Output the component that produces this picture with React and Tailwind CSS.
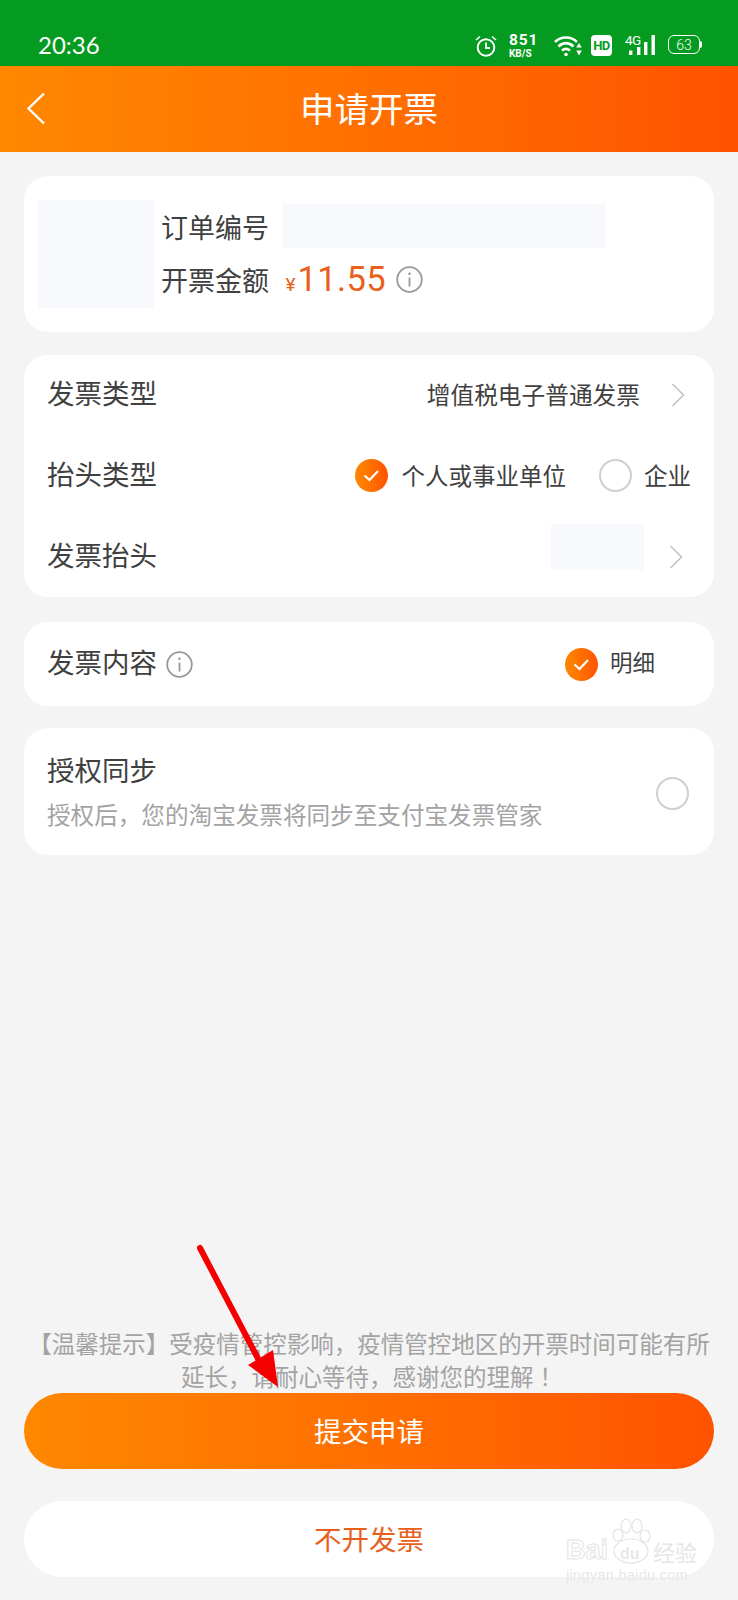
import React from 'react';

const cjk = "font-['Noto_Sans_CJK_SC','Noto_Sans',sans-serif]";

function Chevron({ className }) {
  return (
    <svg className={className} width="14" height="24" viewBox="0 0 14 24" fill="none">
      <path d="M1.5 1 L12.5 12 L1.5 23" stroke="#c4c4c4" strokeWidth="1.6" />
    </svg>
  );
}

function InfoIcon() {
  return (
    <svg width="27" height="27" viewBox="0 0 27 27" fill="none">
      <circle cx="13.5" cy="13.5" r="12.3" stroke="#999" strokeWidth="1.8" />
      <circle cx="13.5" cy="7.8" r="1.3" fill="#999" />
      <path d="M13.5 11.5 V20.5" stroke="#999" strokeWidth="1.8" />
    </svg>
  );
}

function Checked() {
  return (
    <span className="flex h-[33px] w-[33px] shrink-0 items-center justify-center rounded-full bg-gradient-to-r from-[#ff8800] to-[#ff5200]">
      <svg width="17" height="13" viewBox="0 0 17 13" fill="none">
        <path d="M1.5 6.5 L6.5 11 L15 2" stroke="#fff" strokeWidth="2.2" />
      </svg>
    </span>
  );
}

function Unchecked() {
  return <span className="block h-[33px] w-[33px] shrink-0 rounded-full border-2 border-[#cfcfcf]" />;
}

function Label({ children }) {
  return <span className="pb-[4px] text-[27.5px] leading-none">{children}</span>;
}

function StatusIcons() {
  return (
    <div className="flex items-start text-white">
      <svg width="22" height="22" viewBox="0 0 22 22" fill="none" stroke="#fff" strokeWidth="2">
        <circle cx="11" cy="12.5" r="8.3" />
        <path d="M11 7.5 V13 H15" strokeWidth="1.8" />
        <path d="M1 5 L5 1.5 M21 5 L17 1.5" strokeWidth="1.6" />
      </svg>
      <div className="ml-[12px] flex w-[30px] flex-col font-['Roboto',sans-serif] font-bold">
        <span className="-mt-[3px] text-[15.5px] leading-[16px] tracking-[0.8px]">851</span>
        <span className="text-[10px] leading-[11px]">KB/S</span>
      </div>
      <svg className="ml-[15px]" width="28" height="22" viewBox="0 0 28 22" fill="none" stroke="#fff" strokeWidth="2.6">
        <path d="M1 7 C7 1 17 1 23 7" />
        <path d="M4.5 11.5 C9 7 15 7 19.5 11.5" />
        <path d="M8 15.5 C10.5 13.5 13.5 13.5 16 15.5" />
        <circle cx="12" cy="19.5" r="1.8" fill="#fff" stroke="none" />
        <path d="M25 8 L27.8 12.5 H22.2 Z M25 20.5 L27.8 15.5 H22.2 Z" fill="#fff" stroke="none" />
      </svg>
      <span className="ml-[9px] flex h-[21px] w-[21px] items-center justify-center rounded-[4px] bg-white font-['Roboto',sans-serif] text-[13px] font-bold leading-none tracking-[-0.5px] text-[#049b20]">
        HD
      </span>
      <div className="relative ml-[13px] h-[21px] w-[32px]">
        <span className="absolute -top-[1px] left-0 font-['Roboto',sans-serif] text-[13.5px] leading-[13px] tracking-[-0.5px]">4G</span>
        <svg className="absolute left-0 top-0" width="32" height="21" viewBox="0 0 32 21" fill="#fff">
          <rect x="4" y="15.5" width="3.4" height="4.5" />
          <rect x="12" y="12" width="3.4" height="8" />
          <rect x="19" y="7" width="3.4" height="13" />
          <rect x="26.5" y="0" width="3.4" height="20" />
        </svg>
      </div>
      <div className="ml-[11px] flex items-center">
        <span className="flex h-[19px] w-[32px] items-center justify-center rounded-[6px] border-[1.5px] border-white font-['Roboto',sans-serif] text-[14px] font-light leading-none">
          63
        </span>
        <span className="h-[7px] w-[2px] rounded-r-sm bg-white" />
      </div>
    </div>
  );
}

function Watermark() {
  return (
    <div className="pointer-events-none absolute left-[566px] top-[1518px] h-[66px] w-[134px]">
      <span className="absolute left-0 top-[17px] font-['Liberation_Sans',sans-serif] text-[27px] font-bold leading-[30px] text-transparent [-webkit-text-stroke:1px_#e4e4e4]">
        Bai
      </span>
      <svg className="absolute left-[44px] top-0" width="42" height="48" viewBox="0 0 42 48" fill="#fff" stroke="#e4e4e4" strokeWidth="1.2">
        <ellipse cx="8" cy="17" rx="5" ry="6" />
        <ellipse cx="16" cy="8" rx="5" ry="7" />
        <ellipse cx="27" cy="8" rx="5" ry="7" />
        <ellipse cx="35" cy="18" rx="5" ry="6" />
        <ellipse cx="21" cy="33" rx="17" ry="12" />
      </svg>
      <span className="absolute left-[54px] top-[26px] font-['Liberation_Sans',sans-serif] text-[16px] font-bold leading-[20px] text-[#e8e8e8]">
        du
      </span>
      <span className={`absolute left-[87px] top-[21px] text-[22px] leading-[24px] text-[#e6e6e6] ${cjk}`}>经验</span>
      <span className="absolute left-0 top-[49px] font-['Liberation_Sans',sans-serif] text-[14.5px] leading-[17px] tracking-[0.3px] text-[#e8e8e8]">
        jingyan.baidu.com
      </span>
    </div>
  );
}

function Arrow() {
  return (
    <svg className="pointer-events-none absolute left-[190px] top-[1240px]" width="100" height="155" viewBox="0 0 100 155" fill="none">
      <path d="M10 8 L74 130" stroke="#f40000" strokeWidth="6" strokeLinecap="round" />
      <path d="M88 147 L58 125 L83 110 Z" fill="#f40000" />
    </svg>
  );
}

export default function App() {
  return (
    <div className={`relative flex h-[1600px] w-[738px] flex-col overflow-hidden bg-[#f4f4f4] text-[#404040] ${cjk}`}>
      <div className="flex h-[66px] shrink-0 items-start justify-between bg-[#049b20] pl-[38px] pr-[36px] pt-[35px]">
        <span className="-mt-[1px] font-['Lato',sans-serif] text-[24px] leading-[22px] text-white">20:36</span>
        <StatusIcons />
      </div>

      <header className="relative flex h-[86px] shrink-0 items-center justify-center bg-gradient-to-r from-[#ff8800] to-[#ff5200]">
        <svg className="absolute left-[26px] top-[26px]" width="20" height="33" viewBox="0 0 20 33" fill="none">
          <path d="M18 1.5 L2.5 16.5 L18 31.5" stroke="#fff" strokeWidth="2.4" />
        </svg>
        <h1 className="pb-[3px] text-[34.5px] font-normal leading-none text-white">申请开票</h1>
      </header>

      <main className="flex flex-1 flex-col px-[24px]">
        <section className="mt-[24px] flex h-[156px] rounded-[24px] bg-white pl-[14px] pt-[24px]">
          <div className="h-[108px] w-[116px] shrink-0 bg-[#f8f9fc]" />
          <div className="ml-[7px] flex flex-col">
            <div className="flex h-[53px] items-center">
              <span className="w-[120.5px] text-[27px] leading-none">订单编号</span>
              <span className="-mt-[2px] block h-[44px] w-[324px] bg-[#f8f9fc]" />
            </div>
            <div className="flex h-[53px] items-center">
              <span className="w-[124.5px] text-[27px] leading-none">开票金额</span>
              <span className="flex items-baseline pt-[2px] font-['Roboto',sans-serif] text-[#e8601c]">
                <span className="text-[19px]">¥</span>
                <span className="ml-[2px] text-[34.5px] leading-none tracking-[0.4px]">11.55</span>
              </span>
              <span className="ml-[10px] flex"><InfoIcon /></span>
            </div>
          </div>
        </section>

        <section className="mt-[23px] flex h-[242px] flex-col rounded-[24px] bg-white pl-[23px]">
          <div className="flex h-[80px] items-center">
            <Label>发票类型</Label>
            <span className="ml-auto text-[23.7px] leading-none">增值税电子普通发票</span>
            <Chevron className="ml-[31px] mr-[29px]" />
          </div>
          <div className="flex h-[81px] items-center">
            <Label>抬头类型</Label>
            <span className="ml-auto"><Checked /></span>
            <span className="ml-[14px] text-[23.5px] leading-none">个人或事业单位</span>
            <span className="ml-[33px]"><Unchecked /></span>
            <span className="ml-[12px] mr-[23px] text-[23.5px] leading-none">企业</span>
          </div>
          <div className="flex h-[81px] items-center">
            <Label>发票抬头</Label>
            <span className="ml-auto -mt-[20px] block h-[46px] w-[93px] bg-[#f8f9fc]" />
            <Chevron className="ml-[25px] mr-[31px]" />
          </div>
        </section>

        <section className="mt-[25px] flex h-[84px] items-center rounded-[24px] bg-white pl-[23px]">
          <Label>发票内容</Label>
          <span className="ml-[9px] flex"><InfoIcon /></span>
          <span className="ml-auto"><Checked /></span>
          <span className="ml-[12px] mr-[59px] pb-[5px] text-[22.5px] leading-none">明细</span>
        </section>

        <section className="mt-[22px] flex h-[127px] items-center rounded-[24px] bg-white pl-[23px] pr-[25px]">
          <div className="flex flex-col pb-[3px]">
            <span className="text-[27.5px] leading-[32px]">授权同步</span>
            <span className="mt-[15px] text-[23.6px] leading-[28px] text-[#a3a3a3]">授权后，您的淘宝发票将同步至支付宝发票管家</span>
          </div>
          <span className="ml-auto mt-[4px]"><Unchecked /></span>
        </section>

        <p className="mt-auto text-center text-[23.5px] leading-[33px] text-[#a3a3a3]">
          【温馨提示】受疫情管控影响，疫情管控地区的开票时间可能有所延长，请耐心等待，感谢您的理解<span className="font-['Noto_Sans_CJK_TC',sans-serif]">！</span>
        </p>

        <button className="flex h-[76px] shrink-0 items-center justify-center rounded-full bg-gradient-to-r from-[#ff8800] to-[#ff5200] text-[27.5px] text-white">
          提交申请
        </button>
        <button className="mb-[23px] mt-[32px] flex h-[76px] shrink-0 items-center justify-center rounded-full bg-white text-[27.5px] text-[#e8601c]">
          不开发票
        </button>
      </main>

      <Arrow />
      <Watermark />
    </div>
  );
}
